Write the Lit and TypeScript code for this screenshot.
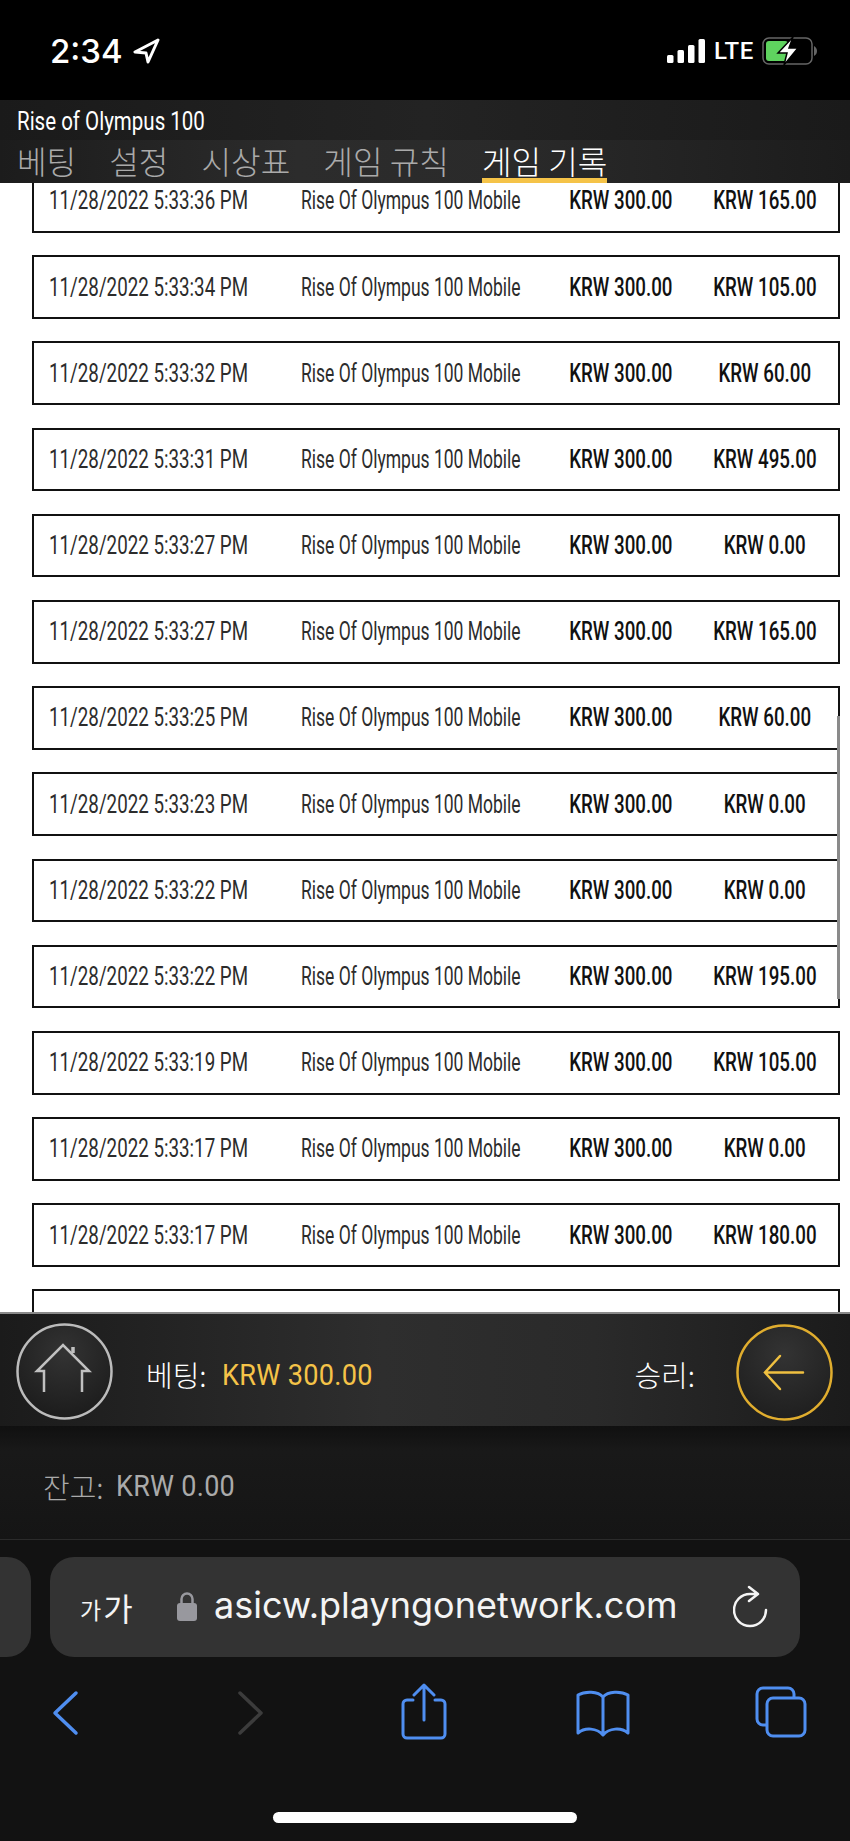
import { LitElement, css, html } from 'lit';
import { customElement } from 'lit/decorators.js';

const rows = [
  ['5:33:36', '165.00'],
  ['5:33:34', '105.00'],
  ['5:33:32', '60.00'],
  ['5:33:31', '495.00'],
  ['5:33:27', '0.00'],
  ['5:33:27', '165.00'],
  ['5:33:25', '60.00'],
  ['5:33:23', '0.00'],
  ['5:33:22', '0.00'],
  ['5:33:22', '195.00'],
  ['5:33:19', '105.00'],
  ['5:33:17', '0.00'],
  ['5:33:17', '180.00'],
];

@customElement('app-root')
export class AppRoot extends LitElement {
  static styles = css`
    :host {
      display: flex;
      flex-direction: column;
      width: 850px;
      height: 1841px;
      overflow: hidden;
      background: #fff;
      font-family: Roboto, 'Noto Sans CJK KR', sans-serif;
    }

    /* status bar */
    .status {
      height: 100px;
      flex: none;
      background: #000;
      color: #fff;
      display: flex;
      align-items: center;
      padding: 2px 33px 0 50px;
      box-sizing: border-box;
      position: relative;
    }
    .clock {
      font: 500 33px/1 Inter, Roboto, sans-serif;
      width: 83px;
    }
    .status-right {
      margin-left: auto;
      display: flex;
      align-items: center;
      gap: 9px;
    }
    .lte {
      font: 500 24px/1 Roboto, sans-serif;
      letter-spacing: 0.5px;
      width: 39px;
    }

    /* game header */
    .title-row {
      height: 40px;
      flex: none;
      box-sizing: border-box;
      padding: 6px 0 0 17px;
      background: linear-gradient(90deg, #1a1a1a, #232323 50%, #1a1a1a);
      color: #fff;
    }
    .title {
      display: inline-block;
      font: 400 25px/32px Roboto, sans-serif;
      transform: scaleX(0.82);
      transform-origin: left;
      white-space: nowrap;
    }
    .tabs {
      height: 43px;
      flex: none;
      box-sizing: border-box;
      padding-left: 17px;
      display: flex;
      gap: 33px;
      background: linear-gradient(90deg, #1c1c1c, #2c2c2c 35%, #2a2a2a 60%, #1c1c1c);
      color: #aaa;
      font: 300 32.2px/40px 'Noto Sans CJK KR', sans-serif;
      white-space: nowrap;
      position: relative;
      z-index: 2;
    }
    .tab {
      height: 43px;
      box-sizing: border-box;
    }
    .tab.on {
      color: #fff;
      border-bottom: 5px solid #f5c348;
    }

    /* history list */
    .list {
      flex: 1;
      min-height: 0;
      overflow: hidden;
      position: relative;
      background: #fff;
    }
    .rows {
      display: flex;
      flex-direction: column;
      gap: 22.5px;
      margin: -14px 10px 0 32px;
    }
    .row {
      height: 63.7px;
      flex: none;
      box-sizing: border-box;
      border: 2.5px solid #111;
      padding-left: 15px;
      display: grid;
      grid-template-columns: 252px 242px 156px 132px;
      align-items: center;
      color: #111;
      font-size: 25px;
      white-space: nowrap;
    }
    .cell {
      display: inline-block;
      font-weight: 400;
      transform-origin: left;
    }
    .date {
      transform: scaleX(0.75);
      color: #2c2c2c;
    }
    .name {
      transform: scaleX(0.7);
      color: #2c2c2c;
    }
    .money {
      justify-self: center;
      font-weight: 500;
      transform: scaleX(0.75);
      transform-origin: center;
    }
    .scroll {
      position: absolute;
      left: 837px;
      top: 533px;
      width: 3px;
      height: 283px;
      background: #8a8a8a;
    }

    /* bet bar */
    .bar {
      height: 114px;
      flex: none;
      box-sizing: border-box;
      border-top: 2px solid #8a8a8a;
      background: linear-gradient(90deg, #1b1b1b, #2e2e2e 45%, #2a2a2a 70%, #1b1b1b);
      display: flex;
      align-items: center;
      padding: 0 17px 0 16px;
      color: #fff;
    }
    .home {
      width: 97px;
      height: 97px;
      flex: none;
      margin: 3px 33px 0 0;
    }
    .bar-text {
      font: 300 29px/1 'Noto Sans CJK KR', Roboto, sans-serif;
      margin-top: 9px;
    }
    .bet-val {
      font: 400 30px/1 Roboto, sans-serif;
      color: #f5c348;
      margin: 9px 0 0 15px;
      letter-spacing: 0.3px;
      display: inline-block;
      transform: scaleX(0.905);
      transform-origin: left;
    }
    .win {
      margin-left: auto;
      margin-right: 41px;
    }
    .back {
      width: 97px;
      height: 97px;
      flex: none;
      margin-top: 4px;
    }

    /* balance */
    .balance {
      height: 113px;
      flex: none;
      box-sizing: border-box;
      padding: 42px 0 0 43px;
      background: linear-gradient(180deg, #101010, #191919 22%, #151515);
      color: #aaa;
      display: flex;
      align-items: flex-start;
      font: 300 29px/36px 'Noto Sans CJK KR', Roboto, sans-serif;
    }
    .balance b {
      font: 400 30px/36px Roboto, sans-serif;
      letter-spacing: 0.3px;
      margin-left: 12px;
      display: inline-block;
      transform: scaleX(0.9);
      transform-origin: left;
    }

    /* safari chrome */
    .safari {
      flex: none;
      height: 302px;
      box-sizing: border-box;
      border-top: 1px solid #2b2b2b;
      background: #121212;
      position: relative;
    }
    .url-line {
      display: flex;
      gap: 19px;
      margin: 17px 50px 0 -60px;
      height: 100px;
    }
    .ghost {
      width: 91px;
      flex: none;
      background: #333;
      border-radius: 24px;
    }
    .url {
      flex: 1;
      background: #333;
      border-radius: 24px;
      display: flex;
      align-items: center;
      color: #f4f4f4;
      padding-left: 30px;
      position: relative;
    }
    .aa {
      font-family: 'Noto Sans CJK KR', sans-serif;
      font-weight: 400;
      display: flex;
      align-items: center;
      gap: 2px;
      width: 97px;
      flex: none;
    }
    .aa .s { font-size: 23px; margin-top: 4px; }
    .aa .b { font-size: 32px; }
    .lock { width: 20px; height: 30px; flex: none; margin: -2px 17px 0 0; }
    .addr {
      font: 400 36px/1 Inter, 'Liberation Sans', sans-serif;
      white-space: nowrap;
      margin-top: -4px;
    }
    .reload {
      position: absolute;
      right: 31px;
      top: 27px;
      width: 36px;
      height: 44px;
    }
    .nav {
      display: flex;
      justify-content: space-between;
      padding: 26px 38px 0 35px;
    }
    .nav svg {
      width: 60px;
      height: 60px;
      flex: none;
    }
    .indicator {
      position: absolute;
      left: 273px;
      top: 272px;
      width: 304px;
      height: 11px;
      border-radius: 6px;
      background: #fff;
    }
  `;

  render() {
    return html`
      <div class="status">
        <span class="clock">2:34</span>
        <svg width="27" height="26" viewBox="0 0 27 26">
          <path d="M25 2 2 14l11 1 2 9z" fill="none" stroke="#fff" stroke-width="3" stroke-linejoin="round" />
        </svg>
        <div class="status-right">
          <svg width="38" height="24" viewBox="0 0 38 24" fill="#fff">
            <rect x="0" y="16" width="6.5" height="8" rx="1.5" />
            <rect x="10.5" y="11" width="6.5" height="13" rx="1.5" />
            <rect x="21" y="6" width="6.5" height="18" rx="1.5" />
            <rect x="31.5" y="0" width="6.5" height="24" rx="1.5" />
          </svg>
          <span class="lte">LTE</span>
          <svg width="55" height="28" viewBox="0 0 55 28">
            <rect x="1" y="1" width="49" height="26" rx="6" fill="none" stroke="#666" stroke-width="1.5" />
            <path d="M52 9c2 1 3 3 3 5s-1 4-3 5z" fill="#666" />
            <rect x="4" y="4" width="22" height="20" rx="3" fill="#5fd35f" />
            <path d="M31 0 16 16h9l-3 12 14-17h-9z" fill="#fff" stroke="#000" stroke-width="1.5" />
          </svg>
        </div>
      </div>

      <div class="title-row"><span class="title">Rise of Olympus 100</span></div>
      <div class="tabs">
        <span class="tab">베팅</span>
        <span class="tab">설정</span>
        <span class="tab">시상표</span>
        <span class="tab">게임 규칙</span>
        <span class="tab on">게임 기록</span>
      </div>

      <div class="list">
        <div class="rows">
          ${rows.map(
            ([time, win]) => html`
              <div class="row">
                <span><span class="cell date">11/28/2022 ${time} PM</span></span>
                <span><span class="cell name">Rise Of Olympus 100 Mobile</span></span>
                <span class="cell money">KRW 300.00</span>
                <span class="cell money">KRW ${win}</span>
              </div>
            `,
          )}
          <div class="row"></div>
        </div>
        <div class="scroll"></div>
      </div>

      <div class="bar">
        <svg class="home" viewBox="0 0 97 97">
          <defs>
            <radialGradient id="hg" cx="0.5" cy="0.3" r="0.7">
              <stop offset="0" stop-color="#333" />
              <stop offset="1" stop-color="#1c1c1c" />
            </radialGradient>
          </defs>
          <circle cx="48.500" cy="48.500" r="47" fill="url(#hg)" stroke="#bbb" stroke-width="2.500" />
          <path d="M28 69V48h-7l26-26 26 26h-7v21" fill="none" stroke="#c0c0c0" stroke-width="2.500" />
          <path d="M57 30v-6" fill="none" stroke="#c0c0c0" stroke-width="3.500" />
        </svg>
        <span class="bar-text">베팅:</span>
        <span class="bet-val">KRW 300.00</span>
        <span class="bar-text win">승리:</span>
        <svg class="back" viewBox="0 0 97 97">
          <defs>
            <radialGradient id="bg" cx="0.5" cy="0.3" r="0.7">
              <stop offset="0" stop-color="#333" />
              <stop offset="1" stop-color="#1f1f1f" />
            </radialGradient>
          </defs>
          <circle cx="48.500" cy="48.500" r="47" fill="url(#bg)" stroke="#e0ad2e" stroke-width="2.500" />
          <path d="M67 48.500H29M44 32 29 48.500 44 65" fill="none" stroke="#efc040" stroke-width="2.500" stroke-linecap="round" />
        </svg>
      </div>

      <div class="balance">잔고:<b>KRW 0.00</b></div>

      <div class="safari">
        <div class="url-line">
          <div class="ghost"></div>
          <div class="url">
            <span class="aa"><span class="s">가</span><span class="b">가</span></span>
            <svg class="lock" viewBox="0 0 20 30">
              <path d="M4.500 13V8a5.500 5.500 0 0 1 11 0v5" fill="none" stroke="#98989e" stroke-width="2.500" />
              <rect x="0" y="12" width="20" height="18" rx="3" fill="#98989e" />
            </svg>
            <span class="addr">asicw.playngonetwork.com</span>
            <svg class="reload" viewBox="0 0 36 44">
              <path
                d="M24 10H17A16 16 0 1 0 33 26M16 3l9 7-9 7"
                fill="none"
                stroke="#f4f4f4"
                stroke-width="2.500"
                stroke-linecap="round"
                stroke-linejoin="round"
              />
            </svg>
          </div>
        </div>
        <div class="nav">
          <svg viewBox="0 0 60 60">
            <path d="M41 10 20 30l21 20" fill="none" stroke="#4f8ef0" stroke-width="3.500" stroke-linecap="round" stroke-linejoin="round" />
          </svg>
          <svg viewBox="0 0 60 60">
            <path d="M26 10l21 20-21 20" fill="none" stroke="#3c3c3c" stroke-width="3.500" stroke-linecap="round" stroke-linejoin="round" />
          </svg>
          <svg viewBox="0 0 60 60">
            <path
              d="M19 17h-6a4 4 0 0 0-4 4v30a4 4 0 0 0 4 4h34a4 4 0 0 0 4-4V21a4 4 0 0 0-4-4h-6M30 37V3M20 12 30 2l10 10"
              fill="none"
              stroke="#4f8ef0"
              stroke-width="3"
              stroke-linecap="round"
              stroke-linejoin="round"
            />
          </svg>
          <svg viewBox="0 0 60 60">
            <path
              d="M30 14C25 8 12 8 5 12V50C12 44 24 45 30 52C36 45 48 44 55 50V12C48 8 35 8 30 14ZM30 14V50"
              fill="none"
              stroke="#4f8ef0"
              stroke-width="3"
              stroke-linejoin="round"
            />
          </svg>
          <svg viewBox="0 0 60 60">
            <path d="M14 42h-3a6 6 0 0 1-6-6V11a6 6 0 0 1 6-6h25a6 6 0 0 1 6 6v4" fill="none" stroke="#4f8ef0" stroke-width="3" />
            <rect x="15" y="15" width="38" height="38" rx="6" fill="none" stroke="#4f8ef0" stroke-width="3" />
          </svg>
        </div>
        <div class="indicator"></div>
      </div>
    `;
  }
}
